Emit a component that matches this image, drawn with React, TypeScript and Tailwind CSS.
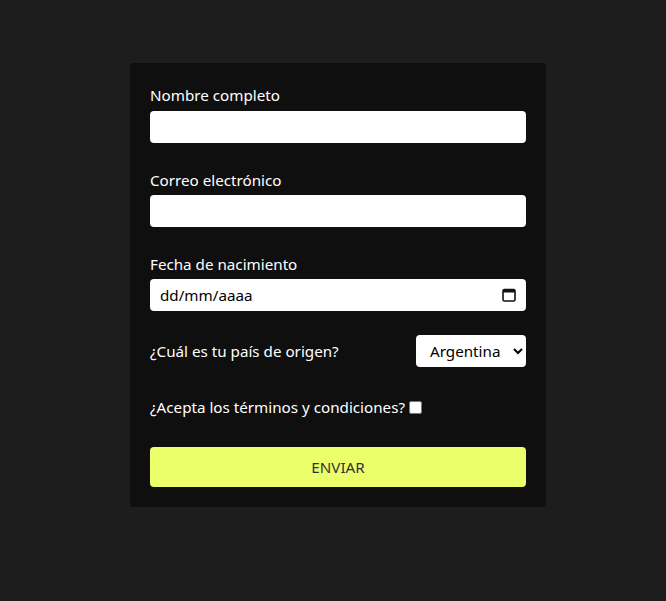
export default function App() {
  return (
    <main
      className="flex min-h-[601px] justify-center bg-[#1d1d1d] pl-[10px] pt-[63px]"
      style={{ fontFamily: '"Noto Sans", "Open Sans", sans-serif' }}
    >
      <form className="flex h-[444px] w-[416px] flex-col rounded-[3px] bg-[#0f0f0f] px-5 pt-5 text-[15.2px] text-white">
        {/* nombre */}
        <label className="block leading-6">Nombre completo</label>
        <input type="text" className="mt-[4px] h-8 w-full rounded bg-white px-2 text-black outline-none" />

        {/* correo */}
        <label className="mt-[25px] block leading-6">Correo electrónico</label>
        <input type="email" className="mt-[3px] h-8 w-full rounded bg-white px-2 text-black outline-none" />

        {/* fecha */}
        <label className="mt-[25px] block leading-6">Fecha de nacimiento</label>
        <div className="mt-[3px] flex h-8 w-full items-center justify-between rounded bg-white pl-2.5 pr-2.5 text-[15.2px] text-black">
          <span>dd/mm/aaaa</span>
          <svg width="14" height="14" viewBox="0 0 14 14" fill="none" aria-hidden>
            <rect x="1" y="1.5" width="12" height="11.5" rx="1.5" stroke="#111" strokeWidth="1.6" />
            <rect x="1" y="1.5" width="12" height="3" fill="#111" />
          </svg>
        </div>

        {/* pais */}
        <div className="mt-6 flex items-center justify-between">
          <span className="leading-6">¿Cuál es tu país de origen?</span>
          <select className="h-8 w-[110px] rounded bg-white pl-2.5 pr-1 text-[15.2px] text-black outline-none">
            <option>Argentina</option>
            <option>Chile</option>
            <option>Uruguay</option>
          </select>
        </div>

        {/* terminos */}
        <div className="mt-7 flex items-center gap-1 leading-6">
          <span>¿Acepta los términos y condiciones?</span>
          <input type="checkbox" className="h-[13px] w-[13px]" />
        </div>

        <button
          type="button"
          className="mt-7 h-10 w-full rounded bg-[#ebff6a] text-[15.2px] text-[#333]"
        >
          ENVIAR
        </button>
      </form>
    </main>
  );
}
